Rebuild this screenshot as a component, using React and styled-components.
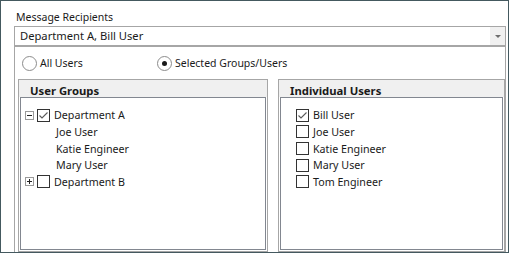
import React from "react";
import styled, { createGlobalStyle } from "styled-components";

const Global = createGlobalStyle`
  html, body { margin: 0; padding: 0; background: #fff; }
  body { font-family: "Noto Sans", "Open Sans", sans-serif; font-size: 11px; color: #1a1a1a; }
`;

const Frame = styled.div`
  box-sizing: border-box;
  width: 509px;
  height: 253px;
  border: 1px solid #44595f;
  overflow: hidden;
  background: #fff;
  padding: 0 2px 0 13px;
  display: flex;
  flex-direction: column;
`;

const FieldLabel = styled.div`
  height: 25px;
  padding: 9px 0 0 2px;
  box-sizing: border-box;
  font-size: 10.5px;
  line-height: 15px;
  white-space: nowrap;
`;

const Combo = styled.div`
  box-sizing: border-box;
  height: 20px;
  border: 1px solid #a6a6a6;
  display: flex;
  align-items: stretch;
  background: #fff;
`;

const ComboText = styled.div`
  flex: 1;
  padding-left: 5px;
  font-size: 11.2px;
  line-height: 17px;
  white-space: nowrap;
`;

const ComboButton = styled.div`
  width: 15px;
  background: #f0f0f0;
  display: flex;
  align-items: center;
  justify-content: center;
`;

const Arrow = styled.div`
  width: 0;
  height: 0;
  border-left: 3px solid transparent;
  border-right: 3px solid transparent;
  border-top: 3px solid #6d6d6d;
  margin-top: 1px;
`;

const GroupBox = styled.div`
  flex: 1;
  box-sizing: border-box;
  border: 1px solid #a6a6a6;
  border-bottom: none;
  padding: 0 0 0 3px;
  display: flex;
  flex-direction: column;
`;

const RadioRow = styled.div`
  height: 32px;
  display: flex;
  align-items: center;
  padding-left: 4px;
  font-size: 10.5px;
`;

const RadioItem = styled.label`
  display: flex;
  align-items: center;
  gap: 3px;
  width: ${(p) => p.$width || "auto"};
  white-space: nowrap;
`;

const RadioCircle = styled.span`
  box-sizing: border-box;
  width: 15px;
  height: 15px;
  border-radius: 50%;
  border: 1px solid #8c8c8c;
  background: #fff;
  display: flex;
  align-items: center;
  justify-content: center;
  &::after {
    content: "";
    width: 5px;
    height: 5px;
    border-radius: 50%;
    background: ${(p) => (p.$checked ? "#1a1a1a" : "transparent")};
  }
`;

const Panels = styled.div`
  flex: 1;
  display: flex;
  gap: 10px;
`;

const Panel = styled.div`
  box-sizing: border-box;
  width: ${(p) => p.$width}px;
  height: 173px;
  border: 1px solid #a6a6a6;
  padding: 0 1px 1px 1px;
  display: flex;
  flex-direction: column;
`;

const PanelHeader = styled.div`
  box-sizing: border-box;
  height: 17px;
  background: #f0f0f0;
  font-weight: 700;
  font-size: 11.3px;
  line-height: 15px;
  padding: 3px 0 0 11px;
  margin: 0 -1px;
  white-space: nowrap;
`;

const ListBox = styled.div`
  flex: 1;
  box-sizing: border-box;
  border: 1px solid #828790;
  background: #fff;
  padding-top: 9px;
  display: flex;
  flex-direction: column;
  font-size: 10.7px;
`;

const Row = styled.div`
  height: 16.67px;
  display: flex;
  align-items: center;
  padding-left: ${(p) => p.$indent}px;
  white-space: nowrap;
`;

const Expander = styled.span`
  box-sizing: border-box;
  width: 9px;
  height: 9px;
  border: 1px solid #9a9a9a;
  margin-right: 3px;
  position: relative;
  background: #fff;
  &::before {
    content: "";
    position: absolute;
    left: 1px;
    top: 3px;
    width: 5px;
    height: 1px;
    background: #222;
  }
  &::after {
    content: "";
    position: absolute;
    left: 3px;
    top: 1px;
    width: 1px;
    height: 5px;
    background: ${(p) => (p.$open ? "transparent" : "#222")};
  }
`;

const Box = styled.span`
  box-sizing: border-box;
  width: 13px;
  height: 13px;
  border: 1px solid #333;
  background: #fff;
  margin-right: 4px;
  display: flex;
  align-items: center;
  justify-content: center;
`;

const Check = () => (
  <svg width="11" height="11" viewBox="0 0 11 11">
    <path d="M1.5 5.5 L4 8 L9.5 2.5" fill="none" stroke="#5a5a5a" strokeWidth="1.1" />
  </svg>
);

const CheckBox = ({ checked }) => <Box>{checked && <Check />}</Box>;

const groups = [
  { kind: "group", label: "Department A", open: true, checked: true },
  { kind: "child", label: "Joe User" },
  { kind: "child", label: "Katie Engineer" },
  { kind: "child", label: "Mary User" },
  { kind: "group", label: "Department B", open: false, checked: false },
];

const users = [
  { label: "Bill User", checked: true },
  { label: "Joe User" },
  { label: "Katie Engineer" },
  { label: "Mary User" },
  { label: "Tom Engineer" },
];

export default function App() {
  return (
    <>
      <Global />
      <Frame>
        <FieldLabel>Message Recipients</FieldLabel>
        <Combo>
          <ComboText>Department A, Bill User</ComboText>
          <ComboButton>
            <Arrow />
          </ComboButton>
        </Combo>
        <GroupBox>
          <RadioRow>
            <RadioItem $width="135px">
              <RadioCircle />
              All Users
            </RadioItem>
            <RadioItem>
              <RadioCircle $checked />
              Selected Groups/Users
            </RadioItem>
          </RadioRow>
          <Panels>
            <Panel $width={250}>
              <PanelHeader>User Groups</PanelHeader>
              <ListBox>
                {groups.map((g) =>
                  g.kind === "group" ? (
                    <Row key={g.label} $indent={4}>
                      <Expander $open={g.open} />
                      <CheckBox checked={g.checked} />
                      {g.label}
                    </Row>
                  ) : (
                    <Row key={g.label} $indent={35}>
                      {g.label}
                    </Row>
                  )
                )}
              </ListBox>
            </Panel>
            <Panel $width={227}>
              <PanelHeader>Individual Users</PanelHeader>
              <ListBox>
                {users.map((u) => (
                  <Row key={u.label} $indent={15}>
                    <CheckBox checked={u.checked} />
                    {u.label}
                  </Row>
                ))}
              </ListBox>
            </Panel>
          </Panels>
        </GroupBox>
      </Frame>
    </>
  );
}
